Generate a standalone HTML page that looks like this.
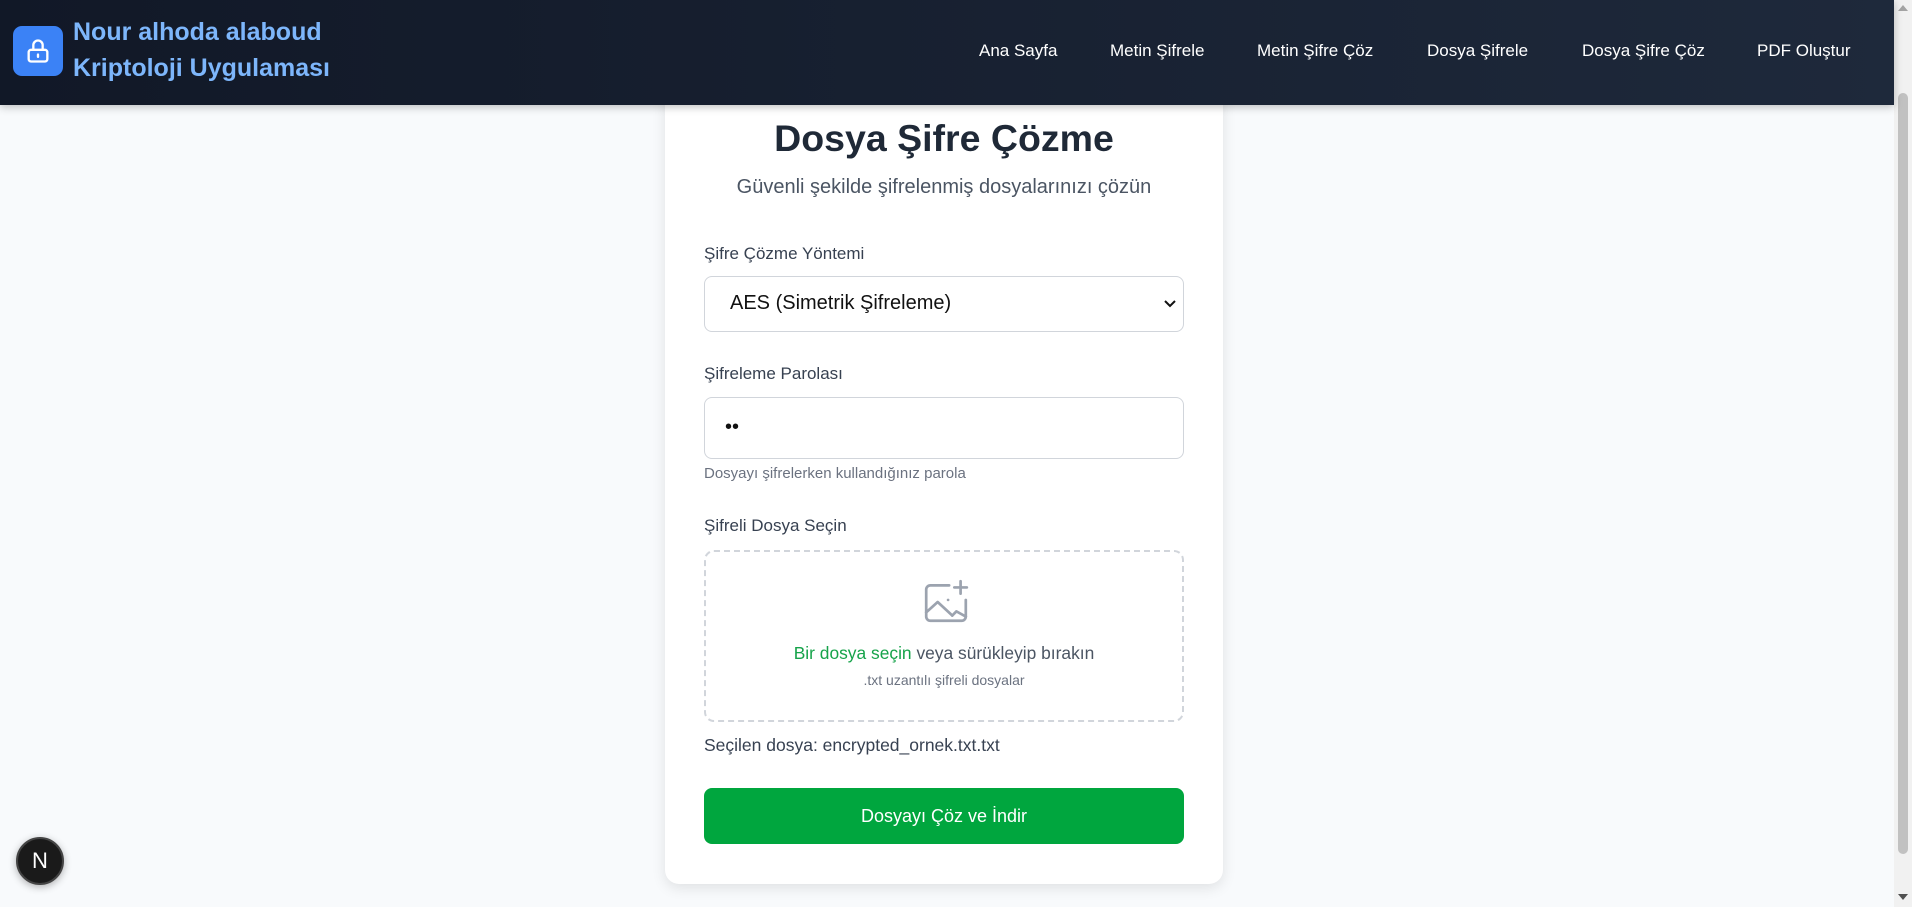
<!DOCTYPE html>
<html><head><meta charset="utf-8"><style>
*{box-sizing:border-box;margin:0;padding:0}
html,body{width:1912px;height:907px;overflow:hidden}
body{background:#f8fafc;font-family:"Liberation Sans",Arial,sans-serif;position:relative}
.hdr{position:absolute;left:0;top:0;width:1894px;height:105px;background:linear-gradient(90deg,#111827,#1e293b);box-shadow:0 2px 8px rgba(0,0,0,.25);z-index:5}
.logo{position:absolute;left:13px;top:26px;width:50px;height:50px;border-radius:9px;background:#3b82f6;display:flex;align-items:center;justify-content:center}
.brand{position:absolute;left:73px;top:14px;font-weight:bold;font-size:25px;line-height:36px;color:#7db6fb}
.nav a{position:absolute;top:41px;color:#fff;font-size:17px;text-decoration:none;white-space:nowrap}
.card{position:absolute;left:665px;top:80px;width:558px;height:804px;background:#fff;border-radius:14px;box-shadow:0 4px 14px rgba(0,0,0,.1)}
.abs{position:absolute;white-space:nowrap}
.lbl{font-size:17px;color:#374151;left:39px}
.box{position:absolute;left:39px;width:480px;border:1px solid #d1d5db;border-radius:8px;background:#fff}
.sb{position:absolute;right:0;top:0;width:18px;height:907px;background:#f1f1f1}
</style></head><body>
<div class="hdr">
 <div class="logo"><svg width="28" height="28" viewBox="0 0 24 24" fill="none" stroke="#fff" stroke-width="2" stroke-linecap="round" stroke-linejoin="round"><rect x="4" y="11" width="16" height="10" rx="2"/><path d="M8 11V7a4 4 0 0 1 8 0v4"/><path d="M12 15v2"/></svg></div>
 <div class="brand">Nour alhoda alaboud<br>Kriptoloji Uygulaması</div>
 <div class="nav">
  <a style="left:979px">Ana Sayfa</a>
  <a style="left:1110px">Metin Şifrele</a>
  <a style="left:1257px">Metin Şifre Çöz</a>
  <a style="left:1427px">Dosya Şifrele</a>
  <a style="left:1582px">Dosya Şifre Çöz</a>
  <a style="left:1757px">PDF Oluştur</a>
 </div>
</div>
<div class="card">
 <div class="abs" style="left:0;width:558px;text-align:center;top:37px;font-size:37.5px;font-weight:bold;color:#1f2937">Dosya Şifre Çözme</div>
 <div class="abs" style="left:0;width:558px;text-align:center;top:96px;font-size:20px;color:#4b5563">Güvenli şekilde şifrelenmiş dosyalarınızı çözün</div>
 <div class="abs lbl" style="top:164px">Şifre Çözme Yöntemi</div>
 <div class="box" style="top:196px;height:56px"><span class="abs" style="left:25px;top:15px;font-size:20px;color:#111">AES (Simetrik Şifreleme)</span>
  <svg class="abs" style="left:459px;top:22px" width="12" height="10" viewBox="0 0 12 10"><path d="M1 2l5 5 5-5" fill="none" stroke="#111" stroke-width="2"/></svg></div>
 <div class="abs lbl" style="top:284px">Şifreleme Parolası</div>
 <div class="box" style="top:317px;height:62px"><span class="abs" style="left:20px;top:18px;font-size:20px;color:#111">••</span></div>
 <div class="abs" style="left:39px;top:385px;font-size:15px;color:#6b7280">Dosyayı şifrelerken kullandığınız parola</div>
 <div class="abs lbl" style="top:436px">Şifreli Dosya Seçin</div>
 <div class="abs" style="left:39px;top:470px;width:480px;height:172px;border:2px dashed #d1d5db;border-radius:10px"></div>
 <svg class="abs" style="left:256px;top:497px" width="50" height="50" viewBox="0 0 48 48" fill="none" stroke="#9ca3af" stroke-width="2.6" stroke-linecap="round" stroke-linejoin="round"><path d="M27 8H9a4 4 0 0 0-4 4v26a4 4 0 0 0 4 4h30a4 4 0 0 0 4-4V22"/><path d="M5 34l11-10 14 13"/><path d="M30 37l4-4 9 5"/><path d="M26 22h.01"/><path d="M38 4v12M32 10h12"/></svg>
 <div class="abs" style="left:0;width:558px;text-align:center;top:563px;font-size:17.4px;color:#4b5563"><span style="color:#16a34a">Bir dosya seçin</span> veya sürükleyip bırakın</div>
 <div class="abs" style="left:0;width:558px;text-align:center;top:592px;font-size:14px;color:#6b7280">.txt uzantılı şifreli dosyalar</div>
 <div class="abs" style="left:39px;top:655px;font-size:17.5px;color:#374151">Seçilen dosya: encrypted_ornek.txt.txt</div>
 <div class="abs" style="left:39px;top:708px;width:480px;height:56px;border-radius:8px;background:#00a63e;color:#fff;font-size:18px;text-align:center;line-height:56px">Dosyayı Çöz ve İndir</div>
</div>
<div class="abs" style="left:16px;top:837px;width:48px;height:48px;border-radius:50%;background:#1a1a1a;border:2px solid #444;color:#fff;font-size:22px;text-align:center;line-height:44px;box-shadow:0 2px 8px rgba(0,0,0,.3)">N</div>
<div class="sb"><div style="position:absolute;left:4px;top:93px;width:10px;height:761px;border-radius:5px;background:#c1c1c1"></div>
<svg style="position:absolute;left:4px;top:4px" width="10" height="8"><path d="M0 7L5 1 10 7Z" fill="#a3a3a3"/></svg>
<svg style="position:absolute;left:4px;top:893px" width="10" height="8"><path d="M0 1L5 7 10 1Z" fill="#505050"/></svg></div>
</body></html>
